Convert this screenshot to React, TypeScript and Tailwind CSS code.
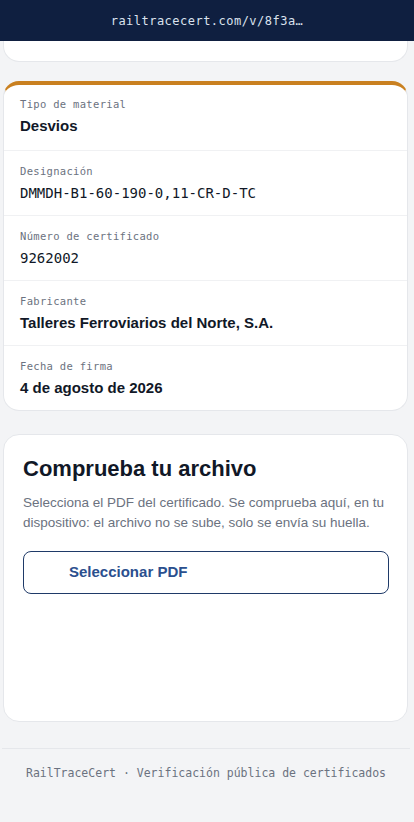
import React from 'react'

const mono = "font-['DejaVu_Sans_Mono','Liberation_Mono',monospace]"
const sans = "font-['Liberation_Sans','Helvetica',Arial,sans-serif]"

interface Field {
  label: string
  value: string
  monoValue?: boolean
}

const fields: Field[] = [
  { label: 'Tipo de material', value: 'Desvios' },
  { label: 'Designación', value: 'DMMDH-B1-60-190-0,11-CR-D-TC', monoValue: true },
  { label: 'Número de certificado', value: '9262002', monoValue: true },
  { label: 'Fabricante', value: 'Talleres Ferroviarios del Norte, S.A.' },
  { label: 'Fecha de firma', value: '4 de agosto de 2026' },
]

export default function App() {
  return (
    <div className={`min-h-[822px] bg-[#f3f4f6] ${sans}`}>
      {/* Address bar */}
      <div className="h-[41px] bg-[#0f1f40] flex items-center justify-center">
        <span className={`${mono} text-[12px] tracking-[0.04em] text-[#dbe2ee]`}>railtracecert.com/v/8f3a…</span>
      </div>

      {/* Tail of previous card */}
      <div className="ml-[3px] w-[405px] h-[21px] bg-white border border-t-0 border-[#e5e7eb] rounded-b-2xl" />

      {/* Certificate details */}
      <div className="ml-[3px] w-[405px] mt-[19px] bg-white border border-[#e5e7eb] border-t-[4px] border-t-[#c98020] rounded-2xl overflow-hidden">
        {fields.map((f, i) => (
          <div
            key={f.label}
            className={`px-4 ${i === 0 ? 'pt-[11px] pb-[13px]' : 'pt-[12px] pb-[11px]'} ${i < fields.length - 1 ? 'border-b border-[#f0f1f3]' : ''}`}
          >
            <div className={`${mono} text-[10.5px] leading-4 tracking-[0.03em] text-[#6b7280]`}>{f.label}</div>
            <div
              className={
                f.monoValue
                  ? `${mono} mt-[3px] text-[14px] leading-[22px] text-[#111827]`
                  : `mt-[3px] text-[15px] leading-[22px] font-bold text-[#111827]`
              }
            >
              {f.value}
            </div>
          </div>
        ))}
      </div>

      {/* File check */}
      <div className="ml-[3px] w-[405px] mt-[23px] h-[288px] bg-white border border-[#e5e7eb] rounded-2xl px-[19px] pt-[20px]">
        <h2 className="text-[22px] leading-7 font-bold text-[#111827]">Comprueba tu archivo</h2>
        <p className="mt-[10px] text-[13.5px] leading-5 text-[#6b7280]">
          Selecciona el PDF del certificado. Se comprueba aquí, en tu dispositivo: el archivo no se sube, solo se envía su huella.
        </p>
        <button className="mt-[18px] w-[366px] h-[43px] border border-[#1f3a68] rounded-lg text-left pl-[45px] text-[15px] font-bold text-[#2b4f8e]">
          Seleccionar PDF
        </button>
      </div>

      {/* Footer */}
      <div className="ml-[2px] w-[408px] mt-[26px] border-t border-[#e5e7eb] pt-[11px] pb-[40px] text-center">
        <span className={`${mono} text-[11.5px] text-[#6b7280]`}>RailTraceCert · Verificación pública de certificados</span>
      </div>
    </div>
  )
}
